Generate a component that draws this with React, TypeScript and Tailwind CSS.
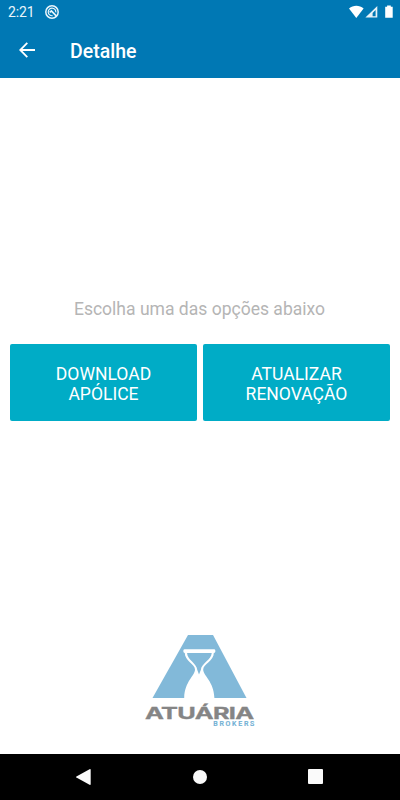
function StatusBar() {
  return (
    <div className="flex h-6 items-center justify-between pl-2 pr-[7px] text-[#eaf5fb]">
      <div className="flex items-center gap-[11px]">
        <span className="w-[26px] whitespace-nowrap text-[14px] leading-6 tracking-[-0.1px]">2:21</span>
        <svg width="14" height="14" viewBox="0 0 14 14" fill="none" stroke="currentColor">
          <circle cx="7" cy="7" r="6.2" strokeWidth="1.5" />
          <path d="M7.6 10.7A3.8 3.8 0 1 1 10.8 7.4" strokeWidth="1.2" />
          <path d="M4.6 7.4 6.4 6l4.8 4.8" strokeWidth="1.7" />
        </svg>
      </div>
      <svg width="45" height="14" viewBox="0 0 45 14" fill="#fff">
        <path d="M1 3.4C5.2-.1 11.4-.1 15.6 3.4L8.3 13Z" />
        <path d="M29.3.9V12.5H17.4ZM27.6 5 24.6 8v3.2h3Z" fillRule="evenodd" fillOpacity=".9" />
        <path d="M39.1.4h3.7v1.4h1.9v11h-7.5v-11h1.9Z" />
      </svg>
    </div>
  );
}

function Header() {
  return (
    <header className="h-[77.5px] shrink-0 bg-[#0078b4]">
      <StatusBar />
      <div className="flex h-[53px] items-center pl-[19px] text-white">
        <svg width="16" height="16" viewBox="0 0 16 16" fill="none" stroke="currentColor" strokeWidth="1.8" className="-mt-px">
          <path d="M16 8H1.4M8.3.8 1.2 8l7.1 7.2" />
        </svg>
        <h1 className="ml-[35px] mt-[2px] text-[19.5px] font-medium leading-6">Detalhe</h1>
      </div>
    </header>
  );
}

function ActionButton({ lines }: { lines: string[] }) {
  return (
    <button className="h-[77.5px] flex-1 rounded-[2px] bg-[#00acc6] pt-[4px] text-[17.55px] leading-[20.4px] text-white">
      {lines.map((line) => (
        <span key={line} className="block">{line}</span>
      ))}
    </button>
  );
}

function Logo() {
  return (
    <svg width="112" height="94" viewBox="0 0 112 94" role="img" aria-label="Atuária Brokers">
      <path d="M44 1h25l33.5 63h-94Z" fill="#82b9d9" />
      {/* hourglass */}
      <path
        d="M40.7 18.5C40.7 27 51 30 51 35.6C51 42 40.8 47 40.2 64H70.4C69.8 47 59.2 42 59.2 35.6C59.2 30 69.9 27 69.9 18.5Z"
        fill="#fff"
      />
      <path d="M43 18.8H67.8C67.2 26.5 57.4 29 56.8 36L55 40.6L53.3 36C52.7 29 43.5 26.5 43 18.8Z" fill="#82b9d9" />
      <rect x="39.4" y="15.2" width="31.9" height="3.7" rx="1.3" fill="#fff" />
      <text
        x="1"
        y="85"
        textLength="108.6"
        lengthAdjust="spacingAndGlyphs"
        fill="#858585"
        stroke="#858585"
        strokeWidth=".3"
        className="font-[Inter,sans-serif] text-[15.8px] font-bold tracking-[-0.4px]"
      >
        ATUÁRIA
      </text>
      <text
        x="69.3"
        y="92.2"
        textLength="41"
        fill="#6fb0d4"
        stroke="#6fb0d4"
        strokeWidth=".2"
        className="font-[Roboto,sans-serif] text-[7px] font-medium"
      >
        BROKERS
      </text>
    </svg>
  );
}

function NavigationBar() {
  return (
    <nav className="flex h-[46.5px] shrink-0 items-center justify-between bg-black pl-[76px] pr-[77px]">
      <svg width="15" height="16" viewBox="0 0 15 16" fill="#fafafa">
        <path d="M14 0q.7 0 .7.7v14.6q0 .7-.7.7L.4 8.5q-.6-.5 0-1Z" />
      </svg>
      <span className="ml-px size-[14.4px] rounded-full bg-[#fafafa]" />
      <span className="size-[15px] rounded-[1px] bg-[#fafafa]" />
    </nav>
  );
}

export default function App() {
  return (
    <div className="flex h-[800px] w-[400px] flex-col overflow-hidden bg-white font-[Roboto,sans-serif]">
      <Header />
      <main className="flex flex-1 flex-col">
        <p className="mt-[219px] pr-px text-center text-[17.55px] leading-6 text-[#b5b5b5]">
          Escolha uma das opções abaixo
        </p>
        <div className="mt-[23px] flex gap-[6px] px-[10px]">
          <ActionButton lines={["DOWNLOAD", "APÓLICE"]} />
          <ActionButton lines={["ATUALIZAR", "RENOVAÇÃO"]} />
        </div>
        <div className="mb-[25.5px] mt-auto flex justify-center">
          <Logo />
        </div>
      </main>
      <NavigationBar />
    </div>
  );
}
